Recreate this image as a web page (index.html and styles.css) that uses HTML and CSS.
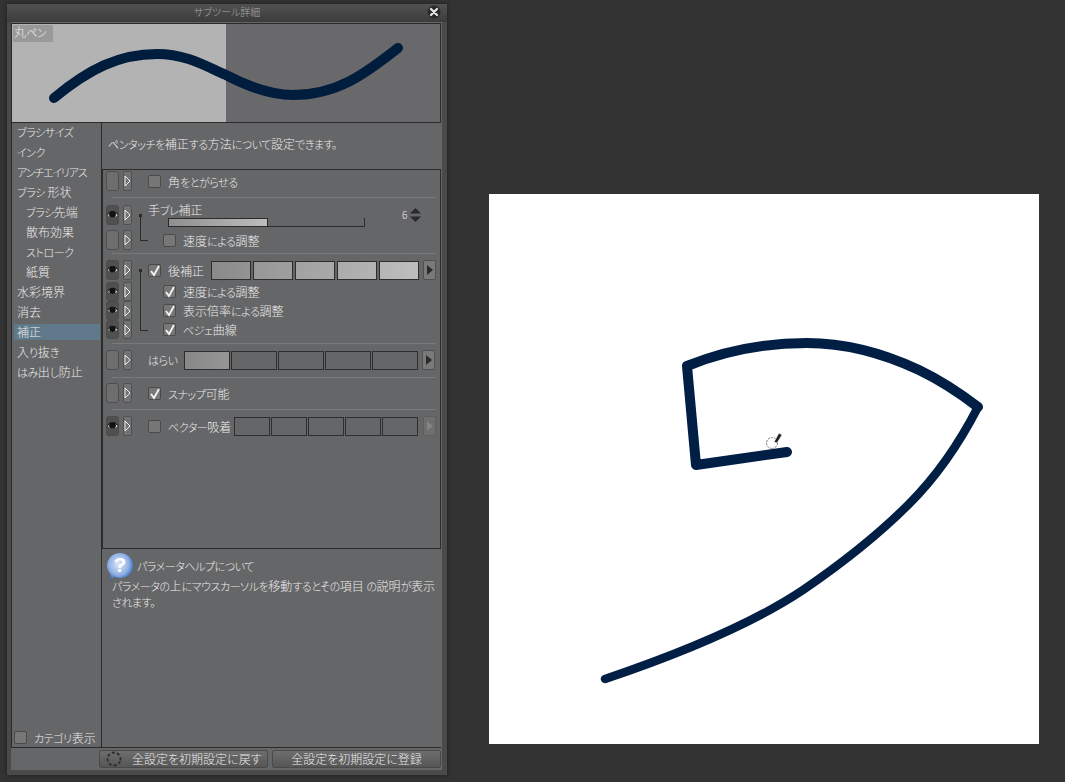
FILE: index.html
```html
<!DOCTYPE html>
<html lang="ja">
<head>
<meta charset="utf-8">
<title>サブツール詳細</title>
<link rel="stylesheet" href="styles.css">
</head>
<body>
<div class="desk">
  <section class="win">
    <header class="title">
      <span>サブツール詳細</span>
      <button class="close" aria-label="閉じる"><svg viewBox="0 0 14 14" width="14" height="14"><circle cx="7" cy="7" r="6.5" fill="#2a2a2a"/><path d="M4 4l6 6M10 4l-6 6" stroke="#e6e6e6" stroke-width="2.2" stroke-linecap="round"/></svg></button>
    </header>
    <div class="inner">
      <div class="preview">
        <div class="pv-light"></div>
        <div class="pv-dark"></div>
        <span class="pv-label">丸<span class="k">ペン</span></span>
        <svg class="pv-stroke" viewBox="0 0 429 98" width="429" height="98">
          <path d="M42 74C77 45 107 30 145 30C175 30 195 43 214 51C235 62 257 71 281 71C325 71 353 50 386 24" fill="none" stroke="#011d3e" stroke-width="10" stroke-linecap="round"/>
        </svg>
      </div>
      <div class="main">
        <aside class="side">
          <ul class="cats">
            <li class="k">ブラシサイズ</li>
            <li class="k">インク</li>
            <li class="k nar">アンチエイリアス</li>
            <li><span class="k">ブラシ</span> 形状</li>
            <li class="sub"><span class="k">ブラシ</span>先端</li>
            <li class="sub">散布効果</li>
            <li class="sub k">ストローク</li>
            <li class="sub">紙質</li>
            <li>水彩境界</li>
            <li>消去</li>
            <li class="sel">補正</li>
            <li>入<span class="k">り</span>抜<span class="k">き</span></li>
            <li><span class="k">はみ</span>出<span class="k">し</span>防止</li>
          </ul>
          <label class="catshow"><span class="chk"></span><span><span class="k">カテゴリ</span>表示</span></label>
        </aside>
        <div class="content">
          <p class="desc"><span class="k">ペンタッチを</span>補正<span class="k">する</span>方法<span class="k">について</span>設定<span class="k">できます。</span></p>
          <div class="settings">
            <div class="sec s1">
              <div class="row">
                <span class="vis"></span><span class="tri"><svg viewBox="0 0 9 20" width="9" height="20"><path d="M2 5l5 5-5 5z" fill="none" stroke="#eee" stroke-width="1"/></svg></span>
                <span class="chk"></span><span class="lbl">角<span class="k">をとがらせる</span></span>
              </div>
            </div>
            <div class="sep"></div>
            <div class="sec s2">
              <div class="row">
                <span class="vis on"><svg viewBox="0 0 13 20" width="13" height="20"><use href="#eye"/></svg></span><span class="tri"><svg viewBox="0 0 9 20" width="9" height="20"><path d="M2 5l5 5-5 5z" fill="none" stroke="#eee" stroke-width="1"/></svg></span>
                <div class="slider">
                  <span class="slabel">手<span class="k">ブレ</span>補正</span>
                  <span class="strack"><span class="sfill"></span></span>
                </div>
                <span class="val">6</span>
                <svg class="spin" viewBox="0 0 11 16" width="11" height="16"><path d="M5.5 1L11 6.5H0zM5.5 15L0 9.5H11z" fill="#2a2a2a"/></svg>
              </div>
              <div class="row gap5">
                <span class="vis"></span><span class="tri"><svg viewBox="0 0 9 20" width="9" height="20"><path d="M2 5l5 5-5 5z" fill="none" stroke="#eee" stroke-width="1"/></svg></span>
                <span class="chk in"></span><span class="lbl">速度<span class="k">による</span>調整</span>
              </div>
              <span class="tree t2"></span>
            </div>
            <div class="sep"></div>
            <div class="sec s3">
              <div class="row">
                <span class="vis on"><svg viewBox="0 0 13 20" width="13" height="20"><use href="#eye"/></svg></span><span class="tri"><svg viewBox="0 0 9 20" width="9" height="20"><path d="M2 5l5 5-5 5z" fill="none" stroke="#eee" stroke-width="1"/></svg></span>
                <span class="chk on"><svg viewBox="0 0 13 13" width="13" height="13"><use href="#tick"/></svg></span><span class="lbl w-a">後補正</span>
                <div class="segs s40">
                  <i class="g1"></i><i class="g2"></i><i class="g3"></i><i class="g4"></i><i class="g5"></i>
                </div>
                <span class="more m4"><svg viewBox="0 0 13 20" width="13" height="20"><path d="M4 5l6 5-6 5z" fill="#2b2b2b"/></svg></span>
              </div>
              <div class="row r19 gap2">
                <span class="vis on"><svg viewBox="0 0 13 19" width="13" height="19"><use href="#eye"/></svg></span><span class="tri"><svg viewBox="0 0 9 19" width="9" height="19"><path d="M2 5l5 5-5 5z" fill="none" stroke="#eee" stroke-width="1"/></svg></span>
                <span class="chk in on"><svg viewBox="0 0 13 13" width="13" height="13"><use href="#tick"/></svg></span><span class="lbl">速度<span class="k">による</span>調整</span>
              </div>
              <div class="row r19">
                <span class="vis on"><svg viewBox="0 0 13 19" width="13" height="19"><use href="#eye"/></svg></span><span class="tri"><svg viewBox="0 0 9 19" width="9" height="19"><path d="M2 5l5 5-5 5z" fill="none" stroke="#eee" stroke-width="1"/></svg></span>
                <span class="chk in on"><svg viewBox="0 0 13 13" width="13" height="13"><use href="#tick"/></svg></span><span class="lbl">表示倍率<span class="k">による</span>調整</span>
              </div>
              <div class="row r19">
                <span class="vis on"><svg viewBox="0 0 13 19" width="13" height="19"><use href="#eye"/></svg></span><span class="tri"><svg viewBox="0 0 9 19" width="9" height="19"><path d="M2 5l5 5-5 5z" fill="none" stroke="#eee" stroke-width="1"/></svg></span>
                <span class="chk in on"><svg viewBox="0 0 13 13" width="13" height="13"><use href="#tick"/></svg></span><span class="lbl"><span class="k">ベジェ</span>曲線</span>
              </div>
              <span class="tree t3"></span>
            </div>
            <div class="sep"></div>
            <div class="sec s4">
              <div class="row">
                <span class="vis"></span><span class="tri"><svg viewBox="0 0 9 20" width="9" height="20"><path d="M2 5l5 5-5 5z" fill="none" stroke="#eee" stroke-width="1"/></svg></span>
                <span class="lbl w-b k">はらい</span>
                <div class="segs s46">
                  <i class="h1"></i><i></i><i></i><i></i><i></i>
                </div>
                <span class="more m4"><svg viewBox="0 0 13 20" width="13" height="20"><path d="M4 5l6 5-6 5z" fill="#2b2b2b"/></svg></span>
              </div>
            </div>
            <div class="sep"></div>
            <div class="sec s5">
              <div class="row">
                <span class="vis"></span><span class="tri"><svg viewBox="0 0 9 20" width="9" height="20"><path d="M2 5l5 5-5 5z" fill="none" stroke="#eee" stroke-width="1"/></svg></span>
                <span class="chk on"><svg viewBox="0 0 13 13" width="13" height="13"><use href="#tick"/></svg></span><span class="lbl"><span class="k">スナップ</span>可能</span>
              </div>
            </div>
            <div class="sep"></div>
            <div class="sec s6">
              <div class="row">
                <span class="vis on"><svg viewBox="0 0 13 20" width="13" height="20"><use href="#eye"/></svg></span><span class="tri"><svg viewBox="0 0 9 20" width="9" height="20"><path d="M2 5l5 5-5 5z" fill="none" stroke="#eee" stroke-width="1"/></svg></span>
                <span class="chk"></span><span class="lbl w-c"><span class="k">ベクター</span>吸着</span>
                <div class="segs s37">
                  <i></i><i></i><i></i><i></i><i></i>
                </div>
                <span class="more off"><svg viewBox="0 0 13 20" width="13" height="20"><path d="M4 5l6 5-6 5z" fill="#858585"/></svg></span>
              </div>
            </div>
          </div>
          <div class="help">
            <div class="help-head">
              <svg class="qicon" viewBox="0 0 28 30" width="28" height="30">
                <defs><radialGradient id="qb" cx="45%" cy="40%" r="60%"><stop offset="0" stop-color="#dfe8f6"/><stop offset=".65" stop-color="#8fb0e4"/><stop offset="1" stop-color="#2f64bf"/></radialGradient></defs>
                <path d="M14 1a13 12.500 0 1 1-6 23.500L5 29l-.5-7A13 12.500 0 0 1 14 1z" fill="url(#qb)"/>
                <text x="14" y="20" text-anchor="middle" class="qmark">?</text>
              </svg>
              <span class="k">パラメータヘルプについて</span>
            </div>
            <p><span class="k">パラメータの</span>上<span class="k">にマウスカーソルを</span>移動<span class="k">するとその</span>項目 <span class="k">の</span>説明<span class="k">が</span>表示<br><span class="k">されます。</span></p>
          </div>
        </div>
      </div>
      <div class="actions">
        <button class="act first">
          <svg viewBox="0 0 18 18" width="18" height="18"><circle cx="9" cy="9" r="6.500" fill="none" stroke="#2d2d2d" stroke-width="1.800" stroke-dasharray="3 2.100" transform="rotate(20 9 9)"/></svg>
          <span>全設定を初期設定に戻す</span>
        </button>
        <button class="act">全設定を初期設定に登録</button>
      </div>
    </div>
  </section>
  <div class="canvas">
    <svg viewBox="0 0 550 550" width="550" height="550">
      <path d="M489 213C470 250 445 285 420 310C390 340 355 368 314 396C260 432 190 460 116 485" fill="none" stroke="#011f45" stroke-width="8.500" stroke-linecap="round"/>
      <path d="M298 258L207 271L198 172C235 157 275 149 318 149C362 149 400 162 430 176C455 188 472 200 489 213" fill="none" stroke="#011f45" stroke-width="10" stroke-linecap="round" stroke-linejoin="round"/>
      <g>
        <ellipse cx="283" cy="249" rx="5.500" ry="5.500" fill="#fff" stroke="#777" stroke-width="1" stroke-dasharray="2 1"/>
        <path d="M285 248l5-9 3 2-5 8z" fill="#222" stroke="#fff" stroke-width=".6"/>
      </g>
    </svg>
  </div>
</div>
<svg class="defs" width="0" height="0" aria-hidden="true">
  <symbol id="eye" viewBox="0 0 13 20" overflow="visible">
    <path d="M2 10C4 6.500 9 6.500 11.500 10C9 13 4 13 2 10z" fill="#e8e8e8"/>
    <ellipse cx="6.500" cy="9.600" rx="3.400" ry="3" fill="#111"/>
    <path d="M1.500 9.500C4 5.500 9 5.500 12 9.500" fill="none" stroke="#111" stroke-width="1"/>
  </symbol>
  <symbol id="tick" viewBox="0 0 13 13" overflow="visible">
    <path d="M3 7l3 4 5-9" fill="none" stroke="#f4f4f4" stroke-width="1.800"/>
  </symbol>
</svg>
</body>
</html>
```

FILE: styles.css
```css
* { box-sizing: border-box; }
html, body { margin: 0; padding: 0; }
body {
  background: #333333;
  font-family: "Noto Sans CJK JP", "Noto Sans", sans-serif;
  font-feature-settings: "palt";
  font-size: 12px;
  font-weight: 300;
  color: #ebebeb;
  overflow: hidden;
}
.k { font-size: 11px; letter-spacing: -.45px; }
.nar { letter-spacing: -1.200px; }
.defs { position: absolute; }
.desk { display: flex; align-items: flex-start; width: 1065px; height: 782px; padding: 4px 0 0 7px; }

.win {
  width: 440px;
  height: 771px;
  padding: 0 5px 5px 4px;
  background: #4a4a4a;
  box-shadow: 0 0 4px #1c1c1c;
  display: flex;
  flex-direction: column;
}
.title {
  height: 18px;
  padding-bottom: 3px;
  position: relative;
  display: flex;
  align-items: center;
  justify-content: center;
  background: linear-gradient(#515151, #3c3c3c);
  margin: 0 -5px 0 -4px;
  color: #a8a8a8;
  font-size: 10px;
}
.close {
  position: absolute;
  right: 6px;
  top: 1px;
  width: 14px;
  height: 14px;
  padding: 0;
  border: 0;
  background: none;
}
.close svg { display: block; }
.inner { flex: 1; background: #656667; display: flex; flex-direction: column; min-height: 0; }

.preview {
  position: relative;
  margin: 1px 1px 0 0;
  height: 100px;
  border: 1px solid #2b2b2b;
  display: flex;
  flex: none;
}
.pv-light { width: 214px; background: #b3b3b3; }
.pv-dark { flex: 1; background: #69696b; }
.pv-label {
  position: absolute;
  left: 1px;
  top: 1px;
  width: 40px;
  height: 17px;
  padding-left: 1px;
  background: #999999;
  line-height: 14px;
  font-size: 12px;
}
.pv-stroke { position: absolute; left: 0; top: 0; }

.main { display: flex; height: 625px; flex: none; }
.side {
  width: 91px;
  border-left: 1px solid #2b2b2b;
  border-right: 1px solid #2b2b2b;
  border-bottom: 1px solid #2b2b2b;
  display: flex;
  flex-direction: column;
  justify-content: space-between;
}
.cats { list-style: none; margin: -1px 0 0; padding: 0 1px 0 2px; }
.cats li { height: 20px; line-height: 20px; padding-left: 3px; white-space: nowrap; }
.cats li.sub { padding-left: 12px; }
.cats li.sel {
  height: 16px;
  line-height: 16px;
  margin: 2px 0;
  padding-left: 3px;
  background: #60798a;
  border-radius: 2px;
}
.catshow { display: flex; align-items: center; gap: 7px; height: 18px; margin: 0 0 0 2px; white-space: nowrap; padding-bottom: 1px; }

.content { flex: 1; display: flex; flex-direction: column; min-width: 0; }
.desc { height: 46px; margin: 0; padding-left: 6px; line-height: 41px; white-space: nowrap; flex: none; }
.settings {
  height: 380px;
  flex: none;
  border: 1px solid #2b2b2b;
  margin-right: 1px;
  padding-left: 3px;
}
.sep { height: 1px; margin: 0 4px 0 6px; background: #7a7a7a; }
.sec { position: relative; }
.s1 { padding: 1px 0 6px; }
.s2 { padding: 7px 0 3px; }
.s3 { padding: 6px 0 4px; }
.s4 { padding: 6px 0 7px; }
.s5 { padding: 5px 0 6px; }
.s6 { padding: 6px 0 0; }
.row { display: flex; align-items: center; height: 20px; }
.r19 { height: 19px; }
.gap5 { margin-top: 5px; }
.gap2 { margin-top: 2px; }
.vis {
  width: 13px;
  height: 100%;
  border-radius: 3px;
  border: 1px solid #4e4e4e;
  background: #6e6e6e;
  flex: none;
}
.vis.on { background: #505050; border-color: #4c4c4c; position: relative; }
.vis svg { display: block; margin: -1px; }
.tri {
  width: 9px;
  height: 100%;
  margin: 0 16px 0 4px;
  border-radius: 2px;
  border: 1px solid #505050;
  background: #727272;
  flex: none;
}
.tri svg { display: block; margin: -1px; }
.chk {
  width: 13px;
  height: 13px;
  flex: none;
  border: 1px solid #4a4a4a;
  border-radius: 2px;
  background: #777777;
}
.chk svg { display: block; margin: -1px; }
.chk.in { margin-left: 15px; }
.lbl { margin-left: 7px; white-space: nowrap; }
.w-a { width: 43px; flex: none; }
.w-b { width: 36px; flex: none; margin-left: 0; }
.w-c { width: 66px; flex: none; margin-left: 7px; }
.segs { display: flex; gap: 1px; height: 19px; flex: none; }
.segs i { display: block; flex: none; height: 100%; border: 1px solid #2e2e2e; background: #656667; }
.s40 { gap: 2px; }
.s40 i { width: 40px; }
.s46 i { width: 46px; }
.s37 i { width: 36px; }
.segs .g1 { background: linear-gradient(90deg, #8a8a8a, #939393); }
.segs .g2 { background: linear-gradient(90deg, #979797, #9f9f9f); }
.segs .g3 { background: linear-gradient(90deg, #a2a2a2, #a9a9a9); }
.segs .g4 { background: linear-gradient(90deg, #acacac, #b3b3b3); }
.segs .g5 { background: linear-gradient(90deg, #b6b6b6, #bebebe); }
.segs .h1 { background: linear-gradient(90deg, #878787, #969696); }
.more {
  width: 13px;
  height: 20px;
  margin-left: 5px;
  border: 1px solid #505050;
  border-radius: 2px;
  background: #7a7a7a;
  flex: none;
}
.more.m4 { margin-left: 4px; }
.more svg { display: block; margin: -1px; }
.more.off { background: #6f6f6f; border-color: #5e5e5e; }
.slider { position: relative; width: 222px; height: 100%; flex: none; }
.slabel { position: absolute; left: 0; top: -3px; line-height: 16px; white-space: nowrap; }
.strack {
  position: absolute;
  left: 20px;
  top: 13px;
  width: 197px;
  height: 9px;
  border-bottom: 1px solid #2b2b2b;
  border-right: 1px solid #2b2b2b;
}
.sfill {
  display: block;
  width: 100px;
  height: 9px;
  border: 1px solid #2b2b2b;
  background: linear-gradient(90deg, #8f8f8f, #bdbdbd);
}
.val { margin-left: 32px; width: 8px; font-size: 10px; line-height: 18px; flex: none; }
.spin { margin-left: 0; flex: none; }
.tree { position: absolute; left: 34px; width: 8px; border-left: 1px solid #2b2b2b; border-bottom: 1px solid #2b2b2b; }
.tree::before {
  content: "";
  position: absolute;
  left: -2px;
  top: -1px;
  width: 3px;
  height: 3px;
  background: #2b2b2b;
}
.t2 { top: 17px; height: 26px; }
.t3 { top: 16px; height: 61px; }

.help { flex: 1; border-bottom: 1px solid #2b2b2b; margin-right: 1px; padding: 3px 6px 0 10px; }
.help-head { display: flex; align-items: center; gap: 3px; height: 29px; margin-left: -6px; }
.help-head span { white-space: nowrap; position: relative; top: -1px; }
.qicon { flex: none; }
.qmark { font-family: "Liberation Sans", sans-serif; font-size: 21px; font-weight: bold; fill: #fff; }
.help p { margin: 0; line-height: 15px; white-space: nowrap; position: relative; top: -3px; }

.actions { display: flex; gap: 4px; padding: 2px 1px 0 88px; }
.act {
  width: 169px;
  height: 18px;
  padding: 0;
  border: 1px solid #494949;
  border-radius: 2px;
  background: linear-gradient(#6e6e6e, #565656);
  color: #ebebeb;
  font: inherit;
  font-feature-settings: "palt";
  line-height: 16px;
  white-space: nowrap;
}
.act.first { display: flex; align-items: center; padding-left: 5px; gap: 9px; }
.act.first svg { flex: none; }

.canvas { width: 550px; height: 550px; margin: 190px 0 0 42px; background: #ffffff; flex: none; }
.canvas svg { display: block; }
```
